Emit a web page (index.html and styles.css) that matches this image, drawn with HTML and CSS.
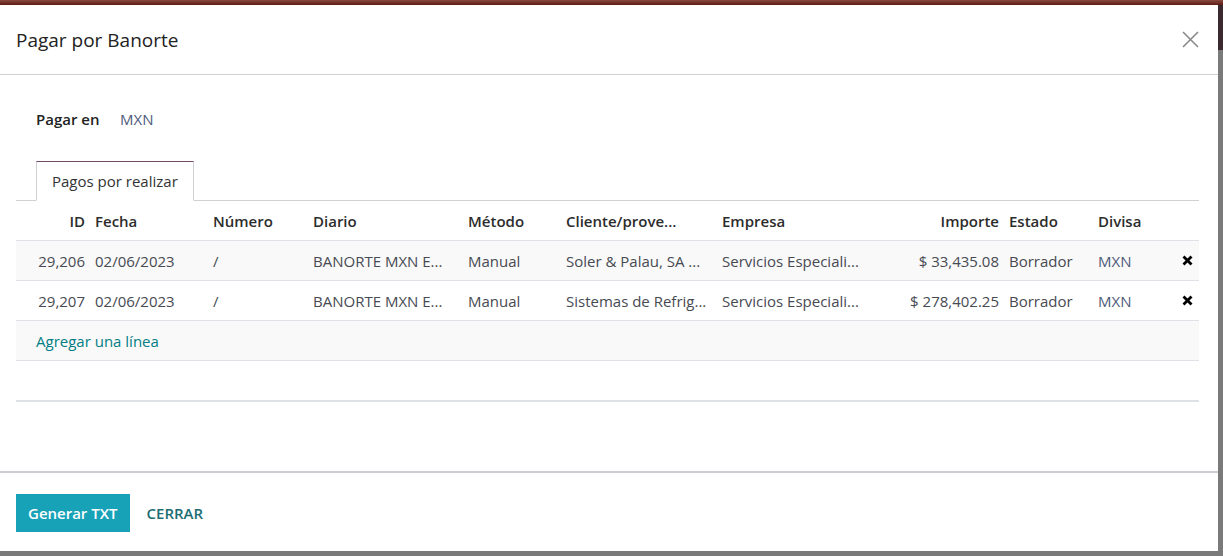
FILE: index.html
```html
<!DOCTYPE html>
<html>

<head>
    <title>Pagar por Banorte</title>
    <link rel="stylesheet" href="styles.css">
</head>

<body>
    <div class="topbar"></div>
    <div class="modal">
        <div class="modal-header">
            <h4 class="modal-title">Pagar por Banorte</h4>
            <button class="btn-close" aria-label="Cerrar">
                <svg width="17" height="17" viewBox="0 0 17 17">
                    <path d="M1 1 L16 16 M16 1 L1 16" stroke="#8a8a8a" stroke-width="1.6" fill="none"/>
                </svg>
            </button>
        </div>
        <div class="modal-body">
            <div class="field-row">
                <span class="field-label">Pagar en</span>
                <span class="field-value">MXN</span>
            </div>
            <div class="tabs">
                <span class="tab active">Pagos por realizar</span>
            </div>
            <table class="list">
                <colgroup>
                    <col style="width: 74px">
                    <col style="width: 118px">
                    <col style="width: 100px">
                    <col style="width: 155px">
                    <col style="width: 98px">
                    <col style="width: 156px">
                    <col style="width: 153px">
                    <col style="width: 134px">
                    <col style="width: 89px">
                    <col style="width: 77px">
                    <col style="width: 29px">
                </colgroup>
                <thead>
                    <tr>
                        <th class="num">ID</th>
                        <th>Fecha</th>
                        <th>Número</th>
                        <th>Diario</th>
                        <th>Método</th>
                        <th title="Cliente/proveedor">Cliente/prove...</th>
                        <th>Empresa</th>
                        <th class="num">Importe</th>
                        <th>Estado</th>
                        <th>Divisa</th>
                        <th></th>
                    </tr>
                </thead>
                <tbody>
                    <tr class="odd">
                        <td class="num">29,206</td>
                        <td>02/06/2023</td>
                        <td>/</td>
                        <td title="BANORTE MXN EGRESOS">BANORTE MXN E...</td>
                        <td>Manual</td>
                        <td title="Soler &amp; Palau, SA de CV">Soler &amp; Palau, SA ...</td>
                        <td title="Servicios Especializados">Servicios Especiali...</td>
                        <td class="num">$ 33,435.08</td>
                        <td>Borrador</td>
                        <td class="link">MXN</td>
                        <td class="del"><svg width="11" height="11" viewBox="0 0 11 11"><path d="M1.5 1.5 L9.5 9.5 M9.5 1.5 L1.5 9.5" stroke="#000" stroke-width="2.8" fill="none"/></svg></td>
                    </tr>
                    <tr>
                        <td class="num">29,207</td>
                        <td>02/06/2023</td>
                        <td>/</td>
                        <td title="BANORTE MXN EGRESOS">BANORTE MXN E...</td>
                        <td>Manual</td>
                        <td title="Sistemas de Refrigeración">Sistemas de Refrig...</td>
                        <td title="Servicios Especializados">Servicios Especiali...</td>
                        <td class="num">$ 278,402.25</td>
                        <td>Borrador</td>
                        <td class="link">MXN</td>
                        <td class="del"><svg width="11" height="11" viewBox="0 0 11 11"><path d="M1.5 1.5 L9.5 9.5 M9.5 1.5 L1.5 9.5" stroke="#000" stroke-width="2.8" fill="none"/></svg></td>
                    </tr>
                    <tr class="odd">
                        <td colspan="11" class="add-line"><a href="#">Agregar una línea</a></td>
                    </tr>
                    <tr>
                        <td colspan="11"></td>
                    </tr>
                </tbody>
            </table>
        </div>
        <div class="modal-footer">
            <button class="btn-primary">Generar TXT</button>
            <button class="btn-link">CERRAR</button>
        </div>
    </div>
</body>

</html>
```

FILE: styles.css
```css
body {
    margin: 0;
    font-family: "Open Sans", Arial, sans-serif;
    font-size: 15px;
    color: #474a52;
    background: linear-gradient(to bottom, #3a2a30 0, #3a2a30 50px, #7a7a7a 50px);
    height: 556px;
    overflow: hidden;
}

.topbar {
    height: 5px;
    background: linear-gradient(to bottom, #8a4a40 0, #5c1c12 100%);
}

.modal {
    width: 1218px;
    height: 546px;
    background: #ffffff;
    display: flex;
    flex-direction: column;
}

.modal-header {
    height: 70px;
    box-sizing: border-box;
    border-bottom: 1px solid #cfd1d4;
    display: flex;
    align-items: center;
    justify-content: space-between;
    padding: 0 19px 0 16px;
}

.modal-title {
    margin: 0;
    font-size: 19px;
    font-weight: 500;
    color: #222222;
}

.btn-close {
    background: none;
    border: none;
    padding: 0;
    cursor: pointer;
    display: flex;
}

.modal-body {
    flex: 1;
    padding: 0 19px 0 16px;
    border-bottom: 2px solid #cacdd1;
}

.field-row {
    display: flex;
    align-items: center;
    height: 30px;
    margin: 29px 0 0 20px;
}

.field-label {
    font-weight: 600;
    color: #222222;
    width: 84px;
}

.field-value {
    color: #4e5a7c;
}

.tabs {
    margin-top: 26px;
    border-bottom: 1px solid #cfd1d4;
    height: 40px;
    display: flex;
    align-items: flex-end;
}

.tab {
    margin-left: 20px;
    margin-bottom: -1px;
    height: 40px;
    box-sizing: border-box;
    padding: 0 15px;
    display: flex;
    align-items: center;
    border: 1px solid #cfd1d4;
    border-top-color: #714b67;
    border-bottom-color: #ffffff;
    color: #333333;
}

.list {
    width: 100%;
    border-collapse: collapse;
    table-layout: fixed;
    border-bottom: 2px solid #dee2e6;
}

.list th,
.list td {
    height: 39px;
    padding: 0 5px;
    text-align: left;
    vertical-align: middle;
    white-space: nowrap;
    overflow: hidden;
    border-bottom: 1px solid #dee2e6;
}

.list th {
    font-weight: 600;
    color: #2c2c2c;
}

.list .num {
    text-align: right;
}

.list tr.odd td {
    background: #f9f9f9;
}

.list td.link {
    color: #4e5a7c;
}

.list td.del {
    padding: 0 0 0 12px;
    line-height: 0;
}

.add-line {
    padding-left: 20px !important;
}

.add-line a {
    color: #017e84;
    text-decoration: none;
}

.modal-footer {
    height: 78px;
    display: flex;
    align-items: center;
    padding: 2px 16px 0;
    box-sizing: border-box;
}

.btn-primary {
    background-color: #17a2b8;
    color: #ffffff;
    border: none;
    font-family: inherit;
    font-size: 15px;
    font-weight: 600;
    height: 38px;
    padding: 0 12px;
    cursor: pointer;
}

.btn-link {
    background: none;
    border: none;
    font-family: inherit;
    font-size: 15px;
    font-weight: 600;
    color: #1d6d73;
    padding: 0 17px;
    cursor: pointer;
}
```
